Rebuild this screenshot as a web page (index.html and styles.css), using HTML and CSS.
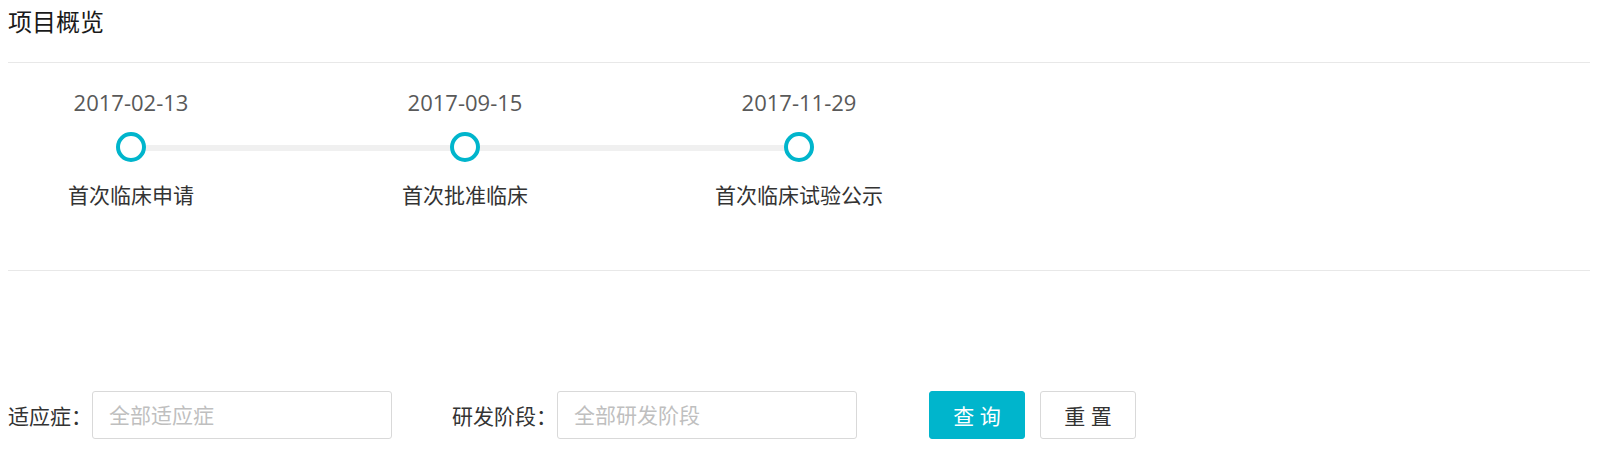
FILE: index.html
```html
<!DOCTYPE html>
<html lang="zh-CN">

<head>
    <meta charset="UTF-8">
    <meta name="viewport" content="width=device-width, initial-scale=1.0">
    <title>项目概览</title>
    <link rel="stylesheet" href="styles.css">
</head>

<body>

    <div class="page">
        <header class="page-header">
            <h1>项目概览</h1>
        </header>

        <!-- Timeline -->
        <div class="overview">
            <div class="timeline">
                <div class="step">
                    <div class="step-date">2017-02-13</div>
                    <div class="step-dot"></div>
                    <div class="step-name">首次临床申请</div>
                </div>
                <div class="step">
                    <div class="step-date">2017-09-15</div>
                    <div class="step-dot"></div>
                    <div class="step-name">首次批准临床</div>
                </div>
                <div class="step">
                    <div class="step-date">2017-11-29</div>
                    <div class="step-dot"></div>
                    <div class="step-name">首次临床试验公示</div>
                </div>
            </div>
        </div>

        <!-- Filter -->
        <form class="filter" onsubmit="return false">
            <div class="filter-item">
                <label for="indication">适应症：</label>
                <input type="text" id="indication" placeholder="全部适应症">
            </div>
            <div class="filter-item">
                <label for="stage">研发阶段：</label>
                <input type="text" id="stage" placeholder="全部研发阶段">
            </div>
            <div class="filter-actions">
                <button type="submit" class="btn btn-primary">查 询</button>
                <button type="reset" class="btn">重 置</button>
            </div>
        </form>
    </div>

</body>

</html>
```

FILE: styles.css
```css
/* Global */
body {
    margin: 0;
    padding: 0;
    font-family: 'Open Sans', 'Noto Sans CJK SC', sans-serif;
    color: #333;
    background-color: #fff;
}

.page {
    padding: 0 10px 0 8px;
}

/* Header */
.page-header {
    height: 62px;
    border-bottom: 1px solid #e8e8e8;
}

.page-header h1 {
    margin: 0;
    font-size: 24px;
    font-weight: normal;
    line-height: 43px;
    color: #1a1a1a;
}

/* Timeline */
.overview {
    padding: 24px 0 60px;
    border-bottom: 1px solid #e8e8e8;
}

.timeline {
    display: flex;
    gap: 154px;
    padding-left: 33px;
}

.step {
    width: 180px;
    display: flex;
    flex-direction: column;
    align-items: center;
}

.step-date {
    font-size: 22px;
    line-height: 30px;
    color: #595959;
}

.step-dot {
    position: relative;
    width: 30px;
    height: 30px;
    box-sizing: border-box;
    margin-top: 15px;
    border: 4px solid #00b5cc;
    border-radius: 50%;
    background-color: #fff;
}

/* connecting line to the next step */
.step:not(:last-child) .step-dot::after {
    content: '';
    position: absolute;
    left: 26px;
    top: 9px;
    width: 304px;
    height: 6px;
    background-color: #f0f0f0;
}

.step-name {
    margin-top: 18px;
    font-size: 21px;
    line-height: 30px;
    color: #333;
}

/* Filter */
.filter {
    display: flex;
    align-items: center;
    margin-top: 120px;
}

.filter-item {
    display: flex;
    align-items: center;
    margin-right: 60px;
}

.filter-item label {
    font-size: 21px;
    color: #333;
}

.filter-item input {
    width: 300px;
    height: 48px;
    box-sizing: border-box;
    padding: 0 16px;
    border: 1px solid #d9d9d9;
    border-radius: 3px;
    font-family: inherit;
    font-size: 21px;
    color: #333;
    outline: none;
}

.filter-item input::placeholder {
    color: #bfbfbf;
}

.filter-actions {
    display: flex;
    gap: 15px;
    margin-left: 12px;
}

.btn {
    width: 96px;
    height: 48px;
    border: 1px solid #d9d9d9;
    border-radius: 3px;
    background-color: #fff;
    font-family: inherit;
    font-size: 21px;
    color: #333;
    cursor: pointer;
}

.btn-primary {
    background-color: #00b5cc;
    border-color: #00b5cc;
    color: #fff;
}
```
